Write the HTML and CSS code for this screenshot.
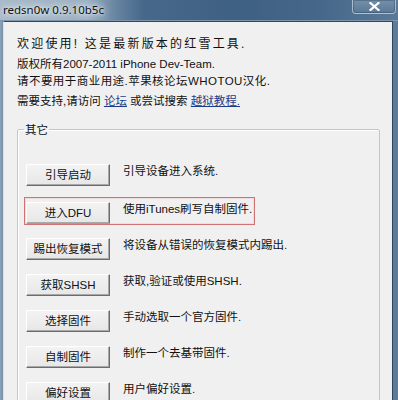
FILE: index.html
```html
<!DOCTYPE html>
<html lang="zh-CN">
<head>
<meta charset="utf-8">
<title>redsn0w 0.9.10b5c</title>
<link rel="stylesheet" href="styles.css">
</head>
<body>
<div class="window">
  <div class="titlebar">
    <span class="title">redsn0w 0.9.10b5c</span>
    <span class="close" aria-label="关闭">
      <svg width="11" height="9" viewBox="0 0 11 9"><path d="M1.5 1 L9.5 8 M9.5 1 L1.5 8" stroke="#fff" stroke-width="2.2" stroke-linecap="square" fill="none"/></svg>
    </span>
  </div>
  <div class="client">
    <p class="line line-wide">欢迎使用! 这是最新版本的红雪工具.</p>
    <p class="line">版权所有2007-2011 iPhone Dev-Team.<br><span class="line-loose">请不要用于商业用途.苹果核论坛WHOTOU汉化.</span></p>
    <p class="line">需要支持,请访问 <a class="link" href="#">论坛</a> 或尝试搜索 <a class="link" href="#">越狱教程.</a></p>
    <fieldset class="group">
      <legend class="legend">其它</legend>
      <div class="rows">
        <div class="row"><button class="btn">引导启动</button><span class="desc">引导设备进入系统.</span></div>
        <div class="row row-mark"><span class="mark"></span><button class="btn">进入DFU</button><span class="desc">使用iTunes刷写自制固件.</span></div>
        <div class="row"><button class="btn">踢出恢复模式</button><span class="desc">将设备从错误的恢复模式内踢出.</span></div>
        <div class="row"><button class="btn">获取SHSH</button><span class="desc">获取,验证或使用SHSH.</span></div>
        <div class="row"><button class="btn">选择固件</button><span class="desc">手动选取一个官方固件.</span></div>
        <div class="row"><button class="btn">自制固件</button><span class="desc">制作一个去基带固件.</span></div>
        <div class="row"><button class="btn">偏好设置</button><span class="desc">用户偏好设置.</span></div>
      </div>
    </fieldset>
  </div>
</div>
</body>
</html>
```
FILE: styles.css
```css
* { box-sizing: border-box; }
html, body { margin: 0; padding: 0; }
body {
  width: 398px;
  height: 400px;
  overflow: hidden;
  background: #6d88a2;
  font-family: "Liberation Sans", "Noto Sans CJK SC", sans-serif;
  font-size: 11.5px;
}
.window {
  width: 398px;
  height: 400px;
  display: flex;
  flex-direction: column;
  background: linear-gradient(90deg, #8ea4b9 0, #7890a8 3px, #5e7c98 100%);
}
.titlebar {
  height: 21px;
  flex: none;
  display: flex;
  align-items: flex-start;
  padding-left: 3px;
  background: linear-gradient(90deg, #a9bac9 0, #9cb0c2 22%, #6885a1 29%, #47688a 36%, #3e6082 60%, #46678a 80%, #5a7996 100%);
  box-shadow: inset 0 -1px 0 #7d96ad;
}
.title {
  font-family: "Noto Sans", "Liberation Sans", sans-serif;
  font-size: 11.5px;
  line-height: 19px;
  color: #111;
  text-shadow: 0 0 6px #e8eef4, 0 0 10px #dfe7ef, 0 0 3px #eef3f7;
}
.close {
  margin-left: auto;
  margin-right: 2px;
  width: 44px;
  height: 14px;
  display: flex;
  align-items: center;
  justify-content: center;
  border: 1px solid rgba(225, 235, 245, 0.55);
  border-top: none;
  border-radius: 0 0 4px 4px;
  background: linear-gradient(#7390ab, #5a7895);
  box-shadow: inset 0 0 0 1px rgba(40, 60, 85, 0.35);
}
.client {
  flex: 1;
  margin: 0 5px 0 3px;
  border: 1px solid #2e4860;
  border-bottom: none;
  border-left-color: #d8e0e8;
  background: #f0f0f0;
  padding: 14px 12px 0 13px;
  color: #111;
}
.line {
  margin: 0 0 3px;
  line-height: 17px;
}
.line-wide { font-size: 12px; letter-spacing: 2.2px; }
.line-loose { letter-spacing: 0.45px; }
.link {
  color: #1d3a86;
  text-decoration: underline;
}
.group {
  margin: 10px 0 0;
  padding: 25px 0 0 8px;
  border: 1px solid #c3c6ca;
  border-radius: 2px;
  box-shadow: inset 1px 1px 0 #fff;
  min-width: 0;
  height: 300px;
}
.legend {
  padding: 2px 1px 0;
  margin-left: -2px;
  line-height: 17px;
  color: #111;
}
.rows {
  display: flex;
  flex-direction: column;
  gap: 14px;
}
.row {
  position: relative;
  display: flex;
  align-items: flex-start;
}
.row-mark { margin-top: 2px; }
.mark {
  position: absolute;
  left: -2px;
  top: -5px;
  width: 231px;
  height: 28px;
  border: 1px solid #cf7474;
  box-shadow: inset 0 0 0 1px rgba(240, 200, 200, 0.5);
}
.btn {
  width: 84px;
  height: 22px;
  padding: 0;
  font: inherit;
  line-height: 20px;
  color: #111;
  text-align: center;
  border: 1px solid;
  border-color: #ffffff #6c6c6c #6c6c6c #ffffff;
  box-shadow: inset -1px -1px 0 #a8a8a8;
  background: linear-gradient(#f3f3f3, #e7e7e7);
}
.desc {
  margin-left: 13px;
  line-height: 14px;
}
```
